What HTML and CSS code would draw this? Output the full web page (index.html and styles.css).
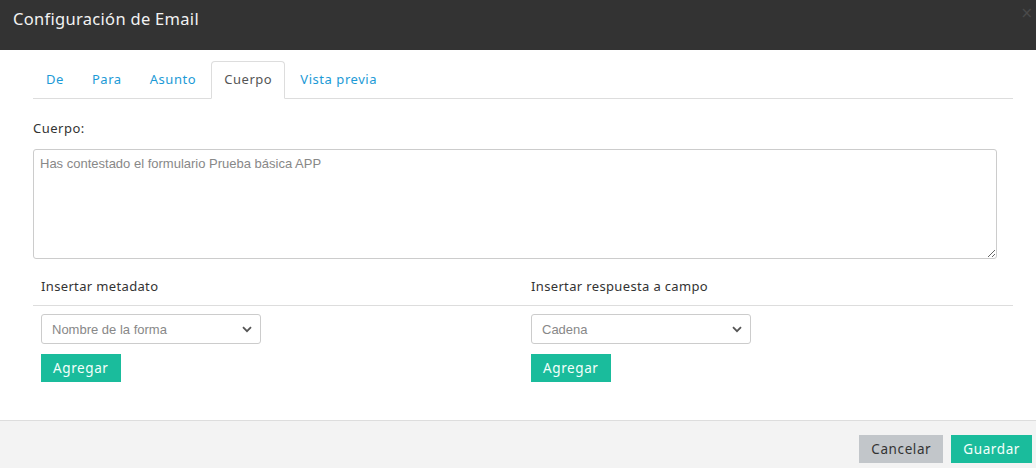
FILE: index.html
```html
<!DOCTYPE html>
<html lang="es">
<head>
<meta charset="utf-8">
<title>Configuración de Email</title>
<link rel="stylesheet" href="styles.css">
</head>
<body>
<div class="modal">
  <div class="modal-header">
    <h4 class="modal-title">Configuración de Email</h4>
    <span class="close">&times;</span>
  </div>
  <div class="modal-body">
    <ul class="tabs">
      <li class="tab"><a>De</a></li>
      <li class="tab"><a>Para</a></li>
      <li class="tab"><a>Asunto</a></li>
      <li class="tab active"><a>Cuerpo</a></li>
      <li class="tab"><a>Vista previa</a></li>
    </ul>
    <div class="tab-content">
      <label class="field-label">Cuerpo:</label>
      <textarea class="body-text">Has contestado el formulario Prueba básica APP</textarea>
      <div class="insert-grid">
        <div class="col">
          <div class="col-head">Insertar metadato</div>
          <div class="col-body">
            <div class="select-wrap">
              <select class="select"><option>Nombre de la forma</option></select>
              <svg class="chev" width="10" height="7" viewBox="0 0 10 7"><path d="M1 1.2 L5 5.2 L9 1.2" fill="none" stroke="#555" stroke-width="1.8"/></svg>
            </div>
            <button class="btn btn-green">Agregar</button>
          </div>
        </div>
        <div class="col">
          <div class="col-head">Insertar respuesta a campo</div>
          <div class="col-body">
            <div class="select-wrap">
              <select class="select"><option>Cadena</option></select>
              <svg class="chev" width="10" height="7" viewBox="0 0 10 7"><path d="M1 1.2 L5 5.2 L9 1.2" fill="none" stroke="#555" stroke-width="1.8"/></svg>
            </div>
            <button class="btn btn-green">Agregar</button>
          </div>
        </div>
      </div>
    </div>
  </div>
  <div class="modal-footer">
    <button class="btn btn-gray">Cancelar</button>
    <button class="btn btn-green">Guardar</button>
  </div>
</div>
</body>
</html>
```

FILE: styles.css
```css
* { box-sizing: border-box; }
html, body { margin: 0; padding: 0; background: #fff; }
body {
  width: 1036px;
  height: 468px;
  overflow: hidden;
  font-family: "Noto Sans", "Open Sans", sans-serif;
  color: #333;
}
.modal { display: flex; flex-direction: column; height: 468px; }
.modal-header {
  height: 50px;
  background: #333333;
  display: flex;
  align-items: flex-start;
  justify-content: space-between;
  padding: 8px 0 0 13px;
}
.modal-title {
  margin: 0;
  font-weight: 400;
  font-size: 16.5px;
  line-height: 22px;
  color: #f2f2f2;
  letter-spacing: 0.3px;
}
.close {
  color: #4a4a4a;
  font-family: "DejaVu Sans", sans-serif;
  font-size: 15px;
  line-height: 10px;
  padding-right: 3px;
}
.modal-body {
  flex: 1;
  padding: 11px 23px 0 33px;
}
.tabs {
  list-style: none;
  margin: 0;
  padding: 0;
  display: flex;
  border-bottom: 1px solid #dddddd;
  height: 38px;
}
.tab {
  margin-right: 2px;
  margin-bottom: -1px;
}
.tab a {
  display: block;
  padding: 0 12px;
  height: 38px;
  line-height: 35px;
  font-size: 13px;
  letter-spacing: 0.55px;
  color: #1c9ad6;
  border: 1px solid transparent;
  border-radius: 4px 4px 0 0;
}
.tab.active a {
  color: #555;
  background: #fff;
  border-color: #dddddd #dddddd transparent;
}
.tab-content { padding-top: 19px; }
.field-label {
  display: block;
  font-size: 13px;
  letter-spacing: 0.5px;
  line-height: 20px;
  margin-bottom: 11px;
  color: #333;
}
.body-text {
  display: block;
  width: 964px;
  height: 110px;
  border: 1px solid #cccccc;
  border-radius: 3px;
  padding: 6px 6px;
  font-family: "Liberation Sans", Arial, sans-serif;
  font-size: 13px;
  line-height: 15px;
  color: #888;
  resize: vertical;
  margin: 0;
}
.insert-grid {
  display: grid;
  grid-template-columns: 490px 490px;
}
.col-head {
  padding: 17px 8px 9px;
  font-size: 13px;
  letter-spacing: 0.35px;
  line-height: 20px;
  border-bottom: 1px solid #dddddd;
  color: #333;
}
.col-body { padding: 8px 8px 0; }
.select-wrap {
  position: relative;
  width: 220px;
  height: 30px;
}
.select {
  -webkit-appearance: none;
  appearance: none;
  width: 220px;
  height: 30px;
  border: 1px solid #cccccc;
  border-radius: 3px;
  background: #fff;
  padding: 0 10px;
  font-family: "Liberation Sans", Arial, sans-serif;
  font-size: 13px;
  color: #888;
  margin: 0;
}
.chev {
  position: absolute;
  right: 9px;
  top: 12px;
  pointer-events: none;
}
.btn {
  border: 0;
  border-radius: 0;
  height: 28px;
  padding: 0 12px;
  font-family: "Noto Sans", "Open Sans", sans-serif;
  font-size: 13.5px;
  letter-spacing: 0.6px;
  line-height: 28px;
  cursor: pointer;
  margin: 0;
}
.col-body .btn { margin-top: 10px; }
.btn-green { background: #1abc9c; color: #f4fffb; }
.btn-gray { background: #c2c6ca; color: #333; }
.modal-footer {
  height: 48px;
  background: #f3f3f3;
  border-top: 1px solid #dddddd;
  display: flex;
  justify-content: flex-end;
  align-items: flex-start;
  gap: 8px;
  padding: 14px 4px 0 0;
}
```
